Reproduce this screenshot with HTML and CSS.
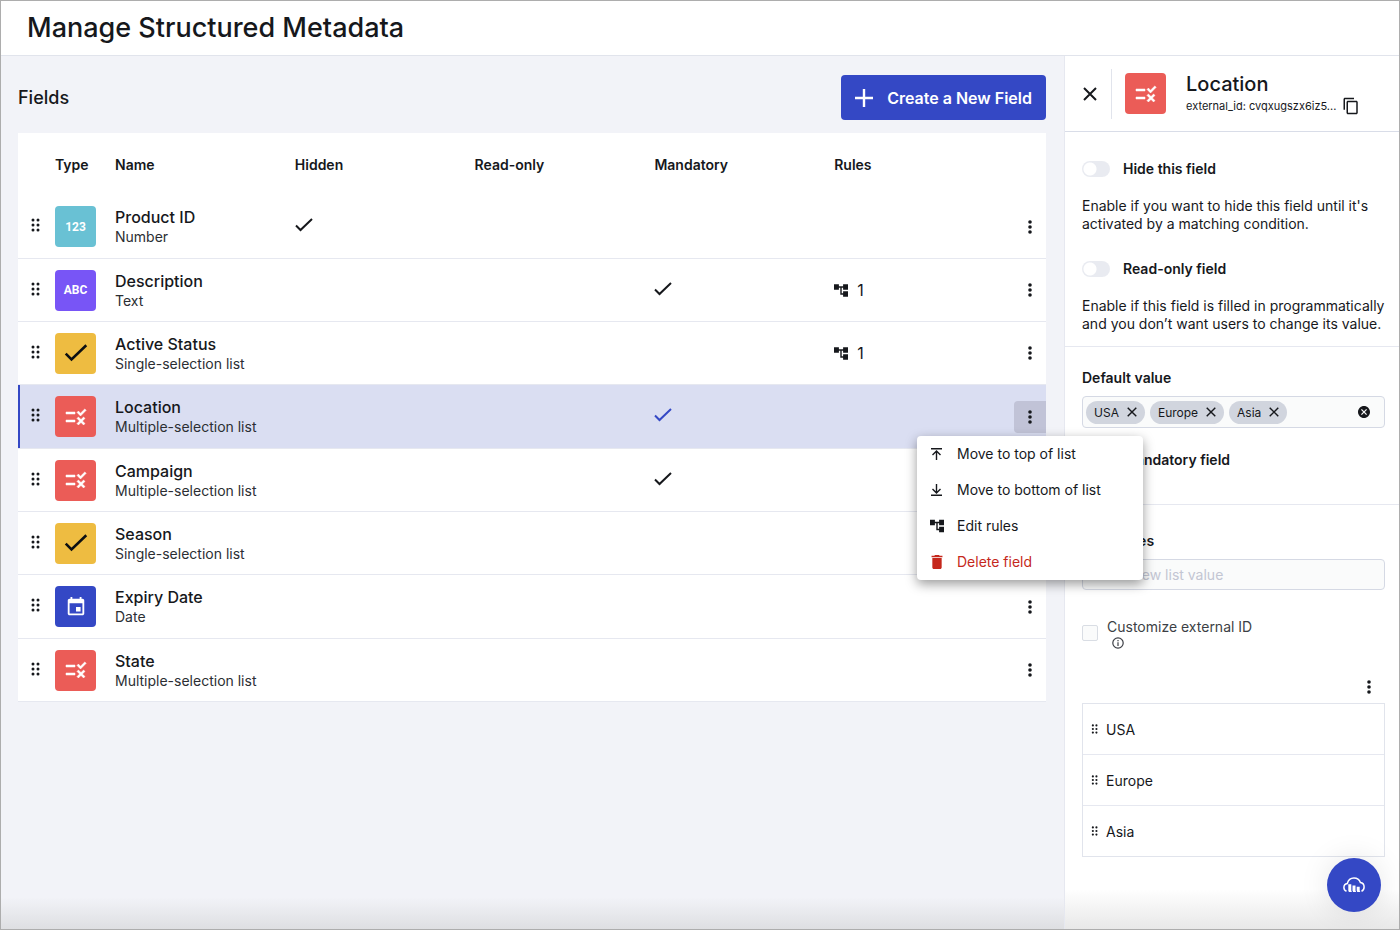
FILE: index.html
```html
<!DOCTYPE html>
<html lang="en">
<head>
    <meta charset="UTF-8">
    <meta name="viewport" content="width=device-width, initial-scale=1.0">
    <title>Manage Structured Metadata</title>
    <link rel="stylesheet" href="styles.css">
</head>
<body>

<!-- Icon set -->
<svg class="sprite" aria-hidden="true">
    <symbol id="i-drag" viewBox="0 0 10 14">
        <circle cx="2" cy="2" r="1.5"/><circle cx="7" cy="2" r="1.5"/>
        <circle cx="2" cy="7" r="1.5"/><circle cx="7" cy="7" r="1.5"/>
        <circle cx="2" cy="12" r="1.5"/><circle cx="7" cy="12" r="1.5"/>
    </symbol>
    <symbol id="i-more" viewBox="0 0 6 14">
        <circle cx="3" cy="2" r="1.8"/><circle cx="3" cy="7" r="1.8"/><circle cx="3" cy="12" r="1.8"/>
    </symbol>
    <symbol id="i-check" viewBox="0 0 18 14">
        <path d="M1 7.5l4.5 4.5L17 1" fill="none" stroke="currentColor" stroke-width="2"/>
    </symbol>
    <symbol id="i-rule" viewBox="0 0 24 24">
        <path d="M16.54 11L13 7.46l1.41-1.41 2.12 2.12 4.24-4.24 1.41 1.41L16.54 11zM11 7H2v2h9V7zm10 6.41L19.59 12 17 14.59 14.41 12 13 13.41 15.59 16 13 18.59 14.41 20 17 17.41 19.59 20 21 18.59 18.41 16 21 13.41zM11 15H2v2h9v-2z" stroke="currentColor" stroke-width=".5"/>
    </symbol>
    <symbol id="i-tree" viewBox="2 3 20 18">
        <path d="M22 11V3h-7v3H9V3H2v8h7V8h2v10h4v3h7v-8h-7v3h-2V8h2v3z"/>
    </symbol>
    <symbol id="i-date" viewBox="0 0 24 24">
        <path d="M17 12h-5v5h5v-5zM16 1v2H8V1H6v2H5c-1.11 0-1.99.9-1.99 2L3 19c0 1.1.89 2 2 2h14c1.1 0 2-.9 2-2V5c0-1.1-.9-2-2-2h-1V1h-2zm3 18H5V8h14v11z"/>
    </symbol>
    <symbol id="i-close" viewBox="0 0 14 14">
        <path d="M1 1l12 12M13 1L1 13" fill="none" stroke="currentColor" stroke-width="2"/>
    </symbol>
    <symbol id="i-plus" viewBox="0 0 18 18">
        <path d="M9 0v18M0 9h18" fill="none" stroke="currentColor" stroke-width="2.4"/>
    </symbol>
    <symbol id="i-copy" viewBox="0 0 24 24">
        <path d="M16 1H4c-1.1 0-2 .9-2 2v14h2V3h12V1zm3 4H8c-1.1 0-2 .9-2 2v14c0 1.1.9 2 2 2h11c1.1 0 2-.9 2-2V7c0-1.1-.9-2-2-2zm0 16H8V7h11v14z"/>
    </symbol>
    <symbol id="i-cancel" viewBox="2 2 20 20">
        <path d="M12 2C6.47 2 2 6.47 2 12s4.47 10 10 10 10-4.47 10-10S17.53 2 12 2zm5 13.59L15.59 17 12 13.41 8.41 17 7 15.59 10.59 12 7 8.41 8.41 7 12 10.59 15.59 7 17 8.41 13.41 12 17 15.59z"/>
    </symbol>
    <symbol id="i-top" viewBox="0 0 14 14">
        <path d="M1 1.7h11M6.5 13V4.5M2.5 8l4-4 4 4" fill="none" stroke="currentColor" stroke-width="1.4"/>
    </symbol>
    <symbol id="i-bottom" viewBox="0 0 14 14">
        <path d="M1 12.3h11M6.5 1v8.500M2.5 6l4 4 4-4" fill="none" stroke="currentColor" stroke-width="1.4"/>
    </symbol>
    <symbol id="i-trash" viewBox="4 3 16 18">
        <path d="M6 19c0 1.1.9 2 2 2h8c1.1 0 2-.9 2-2V7H6v12zM19 4h-3.5l-1-1h-5l-1 1H5v2h14V4z"/>
    </symbol>
    <symbol id="i-info" viewBox="0 0 12 12">
        <circle cx="6" cy="6" r="5.2" fill="none" stroke="currentColor" stroke-width="1.2"/>
        <path d="M6 5.2V9M6 3v1.300" stroke="currentColor" stroke-width="1.2"/>
    </symbol>
    <symbol id="i-cloud" viewBox="0 0 22 16">
        <path d="M3.5 14.3C1.8 13.6.9 12.2.9 10.5c0-2 1.400-3.600 3.400-4C5.100 3.200 7.700 1 11 1c2.900 0 5.400 1.700 6.400 4.500 2.200.3 3.700 2 3.700 4.500 0 2-1 3.600-2.600 4.300" fill="none" stroke="currentColor" stroke-width="1.5"/>
        <path d="M5.300 7.200h3v6.300l.6 1.500h-3l-.6-1.500zM9.500 8.500h3v5l.6 1.500h-3l-.6-1.500zM13.700 9.800h3v3.700l.6 1.500h-3l-.6-1.500z"/>
    </symbol>
</svg>

<div class="page">
    <header class="topbar">
        <h1>Manage Structured Metadata</h1>
    </header>

    <div class="content">
        <main class="fields">
            <div class="fields-head">
                <h2>Fields</h2>
                <button class="btn-create"><svg><use href="#i-plus"/></svg>Create a New Field</button>
            </div>

            <table class="field-table">
                <thead>
                    <tr>
                        <th class="col-drag"></th>
                        <th class="col-type">Type</th>
                        <th>Name</th>
                        <th>Hidden</th>
                        <th>Read-only</th>
                        <th>Mandatory</th>
                        <th>Rules</th>
                        <th class="col-more"></th>
                    </tr>
                </thead>
                <tbody>
                    <tr>
                        <td><svg class="drag"><use href="#i-drag"/></svg></td>
                        <td><span class="tile number">123</span></td>
                        <td><div class="name">Product ID</div><div class="kind">Number</div></td>
                        <td><svg class="check"><use href="#i-check"/></svg></td>
                        <td></td>
                        <td></td>
                        <td></td>
                        <td><button class="more" aria-label="More"><svg><use href="#i-more"/></svg></button></td>
                    </tr>
                    <tr>
                        <td><svg class="drag"><use href="#i-drag"/></svg></td>
                        <td><span class="tile text">ABC</span></td>
                        <td><div class="name">Description</div><div class="kind">Text</div></td>
                        <td></td>
                        <td></td>
                        <td><svg class="check"><use href="#i-check"/></svg></td>
                        <td><span class="rules"><svg><use href="#i-tree"/></svg>1</span></td>
                        <td><button class="more" aria-label="More"><svg><use href="#i-more"/></svg></button></td>
                    </tr>
                    <tr>
                        <td><svg class="drag"><use href="#i-drag"/></svg></td>
                        <td><span class="tile single"><svg><use href="#i-check"/></svg></span></td>
                        <td><div class="name">Active Status</div><div class="kind">Single-selection list</div></td>
                        <td></td>
                        <td></td>
                        <td></td>
                        <td><span class="rules"><svg><use href="#i-tree"/></svg>1</span></td>
                        <td><button class="more" aria-label="More"><svg><use href="#i-more"/></svg></button></td>
                    </tr>
                    <tr class="selected">
                        <td><svg class="drag"><use href="#i-drag"/></svg></td>
                        <td><span class="tile multi"><svg><use href="#i-rule"/></svg></span></td>
                        <td><div class="name">Location</div><div class="kind">Multiple-selection list</div></td>
                        <td></td>
                        <td></td>
                        <td><svg class="check"><use href="#i-check"/></svg></td>
                        <td></td>
                        <td>
                            <div class="more-wrap">
                                <button class="more" aria-label="More"><svg><use href="#i-more"/></svg></button>
                                <div class="menu">
                                    <button><svg><use href="#i-top"/></svg>Move to top of list</button>
                                    <button><svg><use href="#i-bottom"/></svg>Move to bottom of list</button>
                                    <button><svg><use href="#i-tree"/></svg>Edit rules</button>
                                    <button class="danger"><svg><use href="#i-trash"/></svg>Delete field</button>
                                </div>
                            </div>
                        </td>
                    </tr>
                    <tr>
                        <td><svg class="drag"><use href="#i-drag"/></svg></td>
                        <td><span class="tile multi"><svg><use href="#i-rule"/></svg></span></td>
                        <td><div class="name">Campaign</div><div class="kind">Multiple-selection list</div></td>
                        <td></td>
                        <td></td>
                        <td><svg class="check"><use href="#i-check"/></svg></td>
                        <td></td>
                        <td><button class="more" aria-label="More"><svg><use href="#i-more"/></svg></button></td>
                    </tr>
                    <tr>
                        <td><svg class="drag"><use href="#i-drag"/></svg></td>
                        <td><span class="tile single"><svg><use href="#i-check"/></svg></span></td>
                        <td><div class="name">Season</div><div class="kind">Single-selection list</div></td>
                        <td></td>
                        <td></td>
                        <td></td>
                        <td></td>
                        <td><button class="more" aria-label="More"><svg><use href="#i-more"/></svg></button></td>
                    </tr>
                    <tr>
                        <td><svg class="drag"><use href="#i-drag"/></svg></td>
                        <td><span class="tile date"><svg><use href="#i-date"/></svg></span></td>
                        <td><div class="name">Expiry Date</div><div class="kind">Date</div></td>
                        <td></td>
                        <td></td>
                        <td></td>
                        <td></td>
                        <td><button class="more" aria-label="More"><svg><use href="#i-more"/></svg></button></td>
                    </tr>
                    <tr>
                        <td><svg class="drag"><use href="#i-drag"/></svg></td>
                        <td><span class="tile multi"><svg><use href="#i-rule"/></svg></span></td>
                        <td><div class="name">State</div><div class="kind">Multiple-selection list</div></td>
                        <td></td>
                        <td></td>
                        <td></td>
                        <td></td>
                        <td><button class="more" aria-label="More"><svg><use href="#i-more"/></svg></button></td>
                    </tr>
                </tbody>
            </table>
        </main>

        <aside class="panel">
            <div class="panel-head">
                <button class="close" aria-label="Close"><svg><use href="#i-close"/></svg></button>
                <span class="tile multi"><svg><use href="#i-rule"/></svg></span>
                <div>
                    <h2>Location</h2>
                    <div class="ext-id">external_id: cvqxugszx6iz5...<button aria-label="Copy"><svg><use href="#i-copy"/></svg></button></div>
                </div>
            </div>

            <section class="switches">
                <label class="switch"><input type="checkbox">Hide this field</label>
                <p>Enable if you want to hide this field until it's activated by a matching condition.</p>
                <label class="switch"><input type="checkbox">Read-only field</label>
                <p>Enable if this field is filled in programmatically and you don’t want users to change its value.</p>
            </section>

            <section class="defaults">
                <h3>Default value</h3>
                <div class="chips">
                    <span class="chip">USA<button aria-label="Remove USA"><svg><use href="#i-close"/></svg></button></span>
                    <span class="chip">Europe<button aria-label="Remove Europe"><svg><use href="#i-close"/></svg></button></span>
                    <span class="chip">Asia<button aria-label="Remove Asia"><svg><use href="#i-close"/></svg></button></span>
                    <button class="clear" aria-label="Clear"><svg><use href="#i-cancel"/></svg></button>
                </div>
                <label class="switch"><input type="checkbox">Mandatory field</label>
            </section>

            <section class="values">
                <label class="values-label" for="new-value">List values</label>
                <input type="text" id="new-value" class="value-input" placeholder="Add a new list value">
                <div class="custom-id">
                    <input type="checkbox" id="custom-id">
                    <label for="custom-id">Customize external ID<svg><use href="#i-info"/></svg></label>
                </div>
                <button class="list-more" aria-label="List options"><svg><use href="#i-more"/></svg></button>
                <ul class="value-list">
                    <li><svg><use href="#i-drag"/></svg>USA</li>
                    <li><svg><use href="#i-drag"/></svg>Europe</li>
                    <li><svg><use href="#i-drag"/></svg>Asia</li>
                </ul>
            </section>
        </aside>
    </div>

    <button class="fab" aria-label="Open help"><svg><use href="#i-cloud"/></svg></button>
</div>

</body>
</html>
```
FILE: styles.css
```css
* {
    box-sizing: border-box;
}
body {
    margin: 0;
    font-family: Inter, "Liberation Sans", sans-serif;
    font-size: 14px;
    color: #16181c;
}
h1, h2, h3, p, ul {
    margin: 0;
    padding: 0;
}
button {
    display: flex;
    align-items: center;
    justify-content: center;
    padding: 0;
    border: none;
    background: none;
    color: inherit;
    font: inherit;
    cursor: pointer;
}
svg {
    display: block;
    flex: none;
    fill: currentColor;
}
.sprite {
    position: absolute;
    width: 0;
    height: 0;
}
.page {
    position: relative;
    display: flex;
    flex-direction: column;
    min-height: 100vh;
    border: 1px solid #adadad;
    background-color: #f2f3f8;
}
.topbar {
    padding: 10px 26px;
    background-color: #fff;
    border-bottom: 1px solid #e1e4ec;
}
h1 {
    font-size: 27px;
    line-height: 34px;
    font-weight: 500;
}
.content {
    display: flex;
    flex: 1;
    background: linear-gradient(to top, #dedfe2, #f2f3f8 32px);
}

/* Fields table */
.fields {
    flex: 1;
    min-width: 0;
    padding: 19px 18px 18px 17px;
}
.fields-head {
    display: flex;
    align-items: center;
    justify-content: space-between;
    margin-bottom: 13px;
}
.fields-head h2 {
    font-size: 18px;
    font-weight: 500;
}
.btn-create {
    gap: 14px;
    height: 45px;
    padding: 0 14px;
    border-radius: 4px;
    background-color: #3448c5;
    color: #fff;
    font-size: 16px;
    font-weight: 600;
}
.btn-create svg {
    width: 18px;
    height: 18px;
}
.field-table {
    width: 100%;
    table-layout: fixed;
    border-collapse: separate;
    border-spacing: 0;
    background-color: #fff;
}
th {
    height: 62px;
    padding: 0;
    text-align: left;
    font-weight: 600;
}
.col-drag {
    width: 37px;
}
.col-type {
    width: 60px;
}
.col-more {
    width: 32px;
}
td {
    height: 63px;
    padding: 0;
    border-bottom: 1px solid #e6e8f0;
    vertical-align: middle;
}
tr:nth-child(3n+1) td {
    height: 64px;
}
.drag {
    width: 10px;
    height: 14px;
    margin: 0 0 3px 13px;
}
.tile {
    display: flex;
    align-items: center;
    justify-content: center;
    flex: none;
    width: 41px;
    height: 41px;
    border-radius: 4px;
    color: #fff;
    font-size: 12px;
    font-weight: 700;
}
.tile svg {
    width: 24px;
    height: 24px;
}
.number {
    background-color: #69c1d4;
    font-family: Roboto, sans-serif;
}
.text {
    background-color: #7855f6;
    font-family: Roboto, sans-serif;
}
.single {
    background-color: #eebc41;
    color: #0d0f12;
}
.single svg {
    height: 18px;
}
.multi {
    background-color: #eb5c57;
}
.date {
    background-color: #3448c5;
}
.date svg {
    width: 22px;
    height: 22px;
}
.name {
    font-size: 16px;
    line-height: 20px;
    font-weight: 500;
}
.kind {
    line-height: 19px;
    color: #2b2e33;
}
.check {
    width: 18px;
    height: 14px;
    margin-bottom: 3px;
}
.rules {
    display: flex;
    align-items: center;
    gap: 9px;
    font-size: 16px;
}
.rules svg {
    width: 14px;
    height: 13px;
}
.more {
    width: 32px;
    height: 32px;
    border-radius: 4px 0 0 4px;
}
.more svg {
    width: 6px;
    height: 14px;
}
.selected td {
    background-color: #dadef2;
}
.selected td:first-child {
    box-shadow: inset 2px 0 #3448c5;
}
.selected .check {
    color: #3448c5;
}
.selected .more {
    background-color: #c1c3d7;
}

/* Row menu */
.more-wrap {
    position: relative;
}
.menu {
    position: absolute;
    z-index: 2;
    top: 35px;
    right: -97px;
    width: 226px;
    border-radius: 4px;
    background-color: #fff;
    box-shadow: 0 4px 12px rgba(0, 0, 0, 0.4);
}
.menu button {
    justify-content: flex-start;
    gap: 13px;
    width: 100%;
    height: 36px;
    padding: 0 13px;
}
.menu svg {
    width: 14px;
    height: 14px;
}
.menu .danger {
    color: #c5281c;
}

/* Side panel */
.panel {
    width: 335px;
    background: linear-gradient(to top, #e8e8e8, #fff 40px);
    border-left: 1px solid #e6e8f0;
}
.panel-head {
    display: flex;
    align-items: center;
    height: 76px;
    border-bottom: 1px solid #d9dde8;
}
.close {
    width: 47px;
    height: 50px;
    margin-right: 13px;
    padding-left: 4px;
    border-right: 1px solid #e1e4ec;
}
.close svg {
    width: 14px;
    height: 14px;
}
.panel-head .tile {
    margin-right: 20px;
}
.panel-head h2 {
    font-size: 20px;
    line-height: 24px;
    font-weight: 500;
}
.ext-id {
    display: flex;
    align-items: center;
    gap: 6px;
    font-size: 11px;
    line-height: 20px;
}
.ext-id svg {
    width: 18px;
    height: 18px;
}
.switches, .defaults, .values {
    padding: 0 14px 0 17px;
}
.switches, .defaults {
    border-bottom: 1px solid #e6e8f0;
}
.switches {
    padding: 27px 8px 13px 17px;
}
.switch {
    display: flex;
    align-items: center;
    gap: 13px;
    line-height: 20px;
    font-weight: 600;
}
.switch input {
    appearance: none;
    width: 28px;
    height: 16px;
    margin: 0;
    border-radius: 8px;
    background: radial-gradient(circle at 8px 8px, #fff 6px, #e9ebf1 7px);
}
.switches p {
    margin: 18px 0 26px;
    line-height: 18px;
}
.switches p:last-child {
    margin-bottom: 0;
}
h3, .values-label {
    display: block;
    font-size: 14px;
    line-height: 20px;
    font-weight: 600;
}
.defaults {
    padding-top: 21px;
    padding-bottom: 34px;
}
.chips {
    display: flex;
    align-items: center;
    gap: 5px;
    height: 32px;
    margin: 8px 0 22px;
    padding: 0 14px 0 3px;
    border: 1px solid #d5d9e4;
    border-radius: 4px;
    background-color: #fafbfb;
}
.chip {
    display: flex;
    align-items: center;
    gap: 8px;
    height: 23px;
    padding: 0 8px;
    border-radius: 12px;
    background-color: #d1d5de;
    font-size: 12px;
}
.chip svg {
    width: 10px;
    height: 10px;
}
.clear {
    margin-left: auto;
}
.clear svg {
    width: 12px;
    height: 12px;
}
.values {
    padding-top: 26px;
}
.value-input {
    width: 100%;
    height: 31px;
    margin-top: 8px;
    padding: 0 8px;
    border: 1px solid #d5d9e4;
    border-radius: 4px;
    background-color: #fafbfb;
    font: inherit;
}
.value-input::placeholder {
    color: #c3c6d3;
}
.custom-id {
    display: flex;
    align-items: center;
    gap: 9px;
    margin-top: 27px;
    line-height: 20px;
    color: #3c3f45;
}
.custom-id input {
    appearance: none;
    width: 16px;
    height: 16px;
    margin: 0;
    border: 1px solid #d9dde4;
    border-radius: 2px;
    background-color: #fafbfb;
}
.custom-id svg {
    width: 12px;
    height: 12px;
    margin-left: 5px;
}
.list-more {
    width: 16px;
    height: 32px;
    margin: 22px 8px 0 auto;
}
.list-more svg {
    width: 6px;
    height: 14px;
}
.value-list {
    border: 1px solid #e1e4ec;
    list-style: none;
}
.value-list li {
    display: flex;
    align-items: center;
    gap: 7px;
    height: 50px;
    padding-left: 8px;
}
.value-list li + li {
    height: 51px;
    border-top: 1px solid #e6e8f0;
}
.value-list svg {
    width: 8px;
    height: 10px;
}
.fab {
    position: absolute;
    right: 18px;
    bottom: 17px;
    width: 54px;
    height: 54px;
    border-radius: 50%;
    background-color: #3448c5;
    color: #fff;
    box-shadow: 0 0 30px rgba(0, 0, 0, 0.1);
}
.fab svg {
    width: 22px;
    height: 16px;
}
```
